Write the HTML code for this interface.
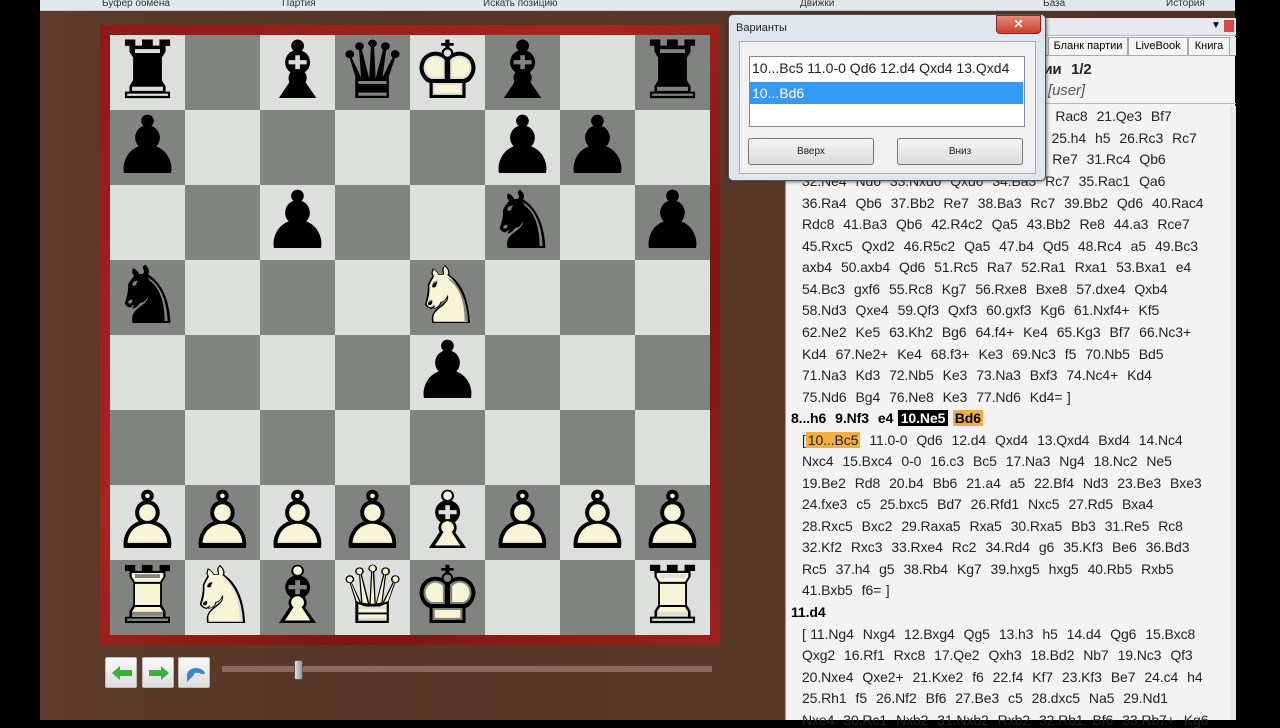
<!DOCTYPE html>
<html><head><meta charset="utf-8"><style>
*{margin:0;padding:0;box-sizing:border-box}
body{width:1280px;height:720px;overflow:hidden;background:#000;position:relative;font-family:"Liberation Sans",sans-serif}
.abs{position:absolute}
#wood{left:40px;top:0;width:1195px;height:720px;background:linear-gradient(90deg,#5e3b2c,#553527 30%,#5b392a 60%,#4f3024);}
#ribbon{left:40px;top:0;width:1195px;height:11px;background:#e3e8ef;border-bottom:1px solid #c8ced8;font-size:10px;color:#333;}
#ribbon span{position:absolute;top:-2px}
#frame{left:100px;top:25px;width:620px;height:620px;background:linear-gradient(135deg,#8e1a18,#a8261f 40%,#7d1512 70%,#9a221c);}
#board{left:110px;top:35px;width:600px;height:600px;display:grid;grid-template-columns:repeat(8,75px);grid-template-rows:repeat(8,75px)}
.sq{position:relative;font-family:"DejaVu Sans",sans-serif;font-size:80px;line-height:72px;text-align:center;overflow:hidden}
.l{background:#dcdfdc}.d{background:#808380}
.b{color:#000}
.w span{position:absolute;left:0;top:0;width:75px}
.w .f{color:#f8f4d6}
.w .o{color:#000}
#panel{left:785px;top:18px;width:450px;height:702px;background:#f3f3f3;border-left:1px solid #999}
.t{position:absolute;left:802px;font-size:14px;color:#222;white-space:pre;word-spacing:0.7px;letter-spacing:-0.1px}
.bold{font-weight:bold;left:791px;color:#000}
.hl{background:#f0b040;padding:0 2px}
.bk{background:#000;color:#fff;padding:0 3px}
#dlg{left:728px;top:14px;width:318px;height:167px;background:#dfe6ee;border:1px solid #555;border-radius:5px;box-shadow:0 0 4px #333}
#dlgin{left:10px;top:26px;width:297px;height:133px;background:#f0f0f0;border:1px solid #aab}
.btn{position:absolute;top:122px;height:27px;width:126px;border:1px solid #777;border-radius:3px;background:linear-gradient(#f4f4f4,#dcdcdc);font-size:10px;text-align:center;line-height:25px;color:#222}
.nb{position:absolute;top:657px;width:32px;height:31px;background:linear-gradient(#fafafa,#ddd);border:1px solid #bbb;border-radius:2px}
</style></head><body>
<div id="wood" class="abs"></div>
<div id="ribbon" class="abs">
<span style="left:62px">Буфер обмена</span><span style="left:242px">Партия</span><span style="left:443px">Искать позицию</span><span style="left:760px">Движки</span><span style="left:1003px">База</span><span style="left:1126px">История</span>
</div>
<div id="frame" class="abs"></div>
<div id="board" class="abs">
<div class="sq l b">♜</div><div class="sq d"></div><div class="sq l b">♝</div><div class="sq d b">♛</div><div class="sq l w"><span class="f">♚</span><span class="o">♔</span></div><div class="sq d b">♝</div><div class="sq l"></div><div class="sq d b">♜</div>
<div class="sq d b">♟</div><div class="sq l"></div><div class="sq d"></div><div class="sq l"></div><div class="sq d"></div><div class="sq l b">♟</div><div class="sq d b">♟</div><div class="sq l"></div>
<div class="sq l"></div><div class="sq d"></div><div class="sq l b">♟</div><div class="sq d"></div><div class="sq l"></div><div class="sq d b">♞</div><div class="sq l"></div><div class="sq d b">♟</div>
<div class="sq d b">♞</div><div class="sq l"></div><div class="sq d"></div><div class="sq l"></div><div class="sq d w"><span class="f">♞</span><span class="o">♘</span></div><div class="sq l"></div><div class="sq d"></div><div class="sq l"></div>
<div class="sq l"></div><div class="sq d"></div><div class="sq l"></div><div class="sq d"></div><div class="sq l b">♟</div><div class="sq d"></div><div class="sq l"></div><div class="sq d"></div>
<div class="sq d"></div><div class="sq l"></div><div class="sq d"></div><div class="sq l"></div><div class="sq d"></div><div class="sq l"></div><div class="sq d"></div><div class="sq l"></div>
<div class="sq l w"><span class="f">♟</span><span class="o">♙</span></div><div class="sq d w"><span class="f">♟</span><span class="o">♙</span></div><div class="sq l w"><span class="f">♟</span><span class="o">♙</span></div><div class="sq d w"><span class="f">♟</span><span class="o">♙</span></div><div class="sq l w"><span class="f">♝</span><span class="o">♗</span></div><div class="sq d w"><span class="f">♟</span><span class="o">♙</span></div><div class="sq l w"><span class="f">♟</span><span class="o">♙</span></div><div class="sq d w"><span class="f">♟</span><span class="o">♙</span></div>
<div class="sq d w"><span class="f">♜</span><span class="o">♖</span></div><div class="sq l w"><span class="f">♞</span><span class="o">♘</span></div><div class="sq d w"><span class="f">♝</span><span class="o">♗</span></div><div class="sq l w"><span class="f">♛</span><span class="o">♕</span></div><div class="sq d w"><span class="f">♚</span><span class="o">♔</span></div><div class="sq l"></div><div class="sq d"></div><div class="sq l w"><span class="f">♜</span><span class="o">♖</span></div>
</div>
<div class="nb" style="left:105px"><svg width="32" height="31"><path d="M6 15 L14 8 L14 12 L26 12 L26 18 L14 18 L14 22Z" fill="#3bb33b"/></svg></div>
<div class="nb" style="left:142px"><svg width="32" height="31"><path d="M26 15 L18 8 L18 12 L6 12 L6 18 L18 18 L18 22Z" fill="#3bb33b"/></svg></div>
<div class="nb" style="left:178px"><svg width="32" height="31"><path d="M8 24 L8 16 Q10 10 18 10 Q25 11 26 16 L22 16 Q20 14 16 15 L14 18Z" fill="#3a86d0"/></svg></div>
<div class="abs" style="left:222px;top:666px;width:490px;height:6px;background:#8a6a5c"></div>
<div class="abs" style="left:294px;top:660px;width:9px;height:20px;background:linear-gradient(90deg,#ddd,#999);border:1px solid #555;border-radius:2px"></div>

<div id="panel" class="abs">
<div class="abs" style="left:0;top:0;width:450px;height:18px;background:#e6e9ee;border-bottom:1px solid #bbb"></div>
<div class="abs" style="left:425px;top:2px;font-size:10px">▼</div>
<div class="abs" style="left:438px;top:2px;width:10px;height:12px;background:#d44;"></div>
<div class="abs" style="left:0;top:19px;width:450px;height:19px;background:#e9ecef;border-bottom:1px solid #999"></div>
<div class="abs" style="left:262px;top:19px;width:80px;height:19px;border:1px solid #aaa;background:#f5f5f5;font-size:11px;text-align:center;line-height:17px">Бланк партии</div>
<div class="abs" style="left:342px;top:19px;width:60px;height:19px;border:1px solid #aaa;background:#f5f5f5;font-size:11px;text-align:center;line-height:17px">LiveBook</div>
<div class="abs" style="left:402px;top:19px;width:42px;height:19px;border:1px solid #aaa;background:#f5f5f5;font-size:11px;text-align:center;line-height:17px">Книга</div>
<div class="abs" style="left:0;top:85px;width:450px;height:1px;background:#bbb"></div>
<div class="abs" style="left:444px;top:88px;width:6px;height:614px;background:#e8e8e8"></div>
</div>
<div class="t" style="left:1010px;top:61px;font-weight:bold;font-size:15px">партии  1/2</div>
<div class="t" style="left:1048px;top:82px;font-style:italic;font-size:15px;color:#555">[user]</div>

<div class="t" style="top:108px;left:998px">19.Rfe1  Rac8  21.Qe3  Bf7</div>
<div class="t" style="top:130px;left:998px">24.Rd8  25.h4  h5  26.Rc3  Rc7</div>
<div class="t" style="top:151px;left:998px">30.Qh3  Re7  31.Rc4  Qb6</div>
<div class="t" style="top:173px">32.Ne4  Nd6  33.Nxd6  Qxd6  34.Ba3  Rc7  35.Rac1  Qa6</div>
<div class="t" style="top:195px">36.Ra4  Qb6  37.Bb2  Re7  38.Ba3  Rc7  39.Bb2  Qd6  40.Rac4</div>
<div class="t" style="top:216px">Rdc8  41.Ba3  Qb6  42.R4c2  Qa5  43.Bb2  Re8  44.a3  Rce7</div>
<div class="t" style="top:238px">45.Rxc5  Qxd2  46.R5c2  Qa5  47.b4  Qd5  48.Rc4  a5  49.Bc3</div>
<div class="t" style="top:259px">axb4  50.axb4  Qd6  51.Rc5  Ra7  52.Ra1  Rxa1  53.Bxa1  e4</div>
<div class="t" style="top:281px">54.Bc3  gxf6  55.Rc8  Kg7  56.Rxe8  Bxe8  57.dxe4  Qxb4</div>
<div class="t" style="top:302px">58.Nd3  Qxe4  59.Qf3  Qxf3  60.gxf3  Kg6  61.Nxf4+  Kf5</div>
<div class="t" style="top:324px">62.Ne2  Ke5  63.Kh2  Bg6  64.f4+  Ke4  65.Kg3  Bf7  66.Nc3+</div>
<div class="t" style="top:346px">Kd4  67.Ne2+  Ke4  68.f3+  Ke3  69.Nc3  f5  70.Nb5  Bd5</div>
<div class="t" style="top:367px">71.Na3  Kd3  72.Nb5  Ke3  73.Na3  Bxf3  74.Nc4+  Kd4</div>
<div class="t" style="top:389px">75.Nd6  Bg4  76.Ne8  Ke3  77.Nd6  Kd4= ]</div>
<div class="t bold" style="top:410px">8...h6  9.Nf3  e4 <span class="bk">10.Ne5</span> <span class="hl">Bd6</span></div>
<div class="t" style="top:432px">[<span class="hl">10...Bc5</span>  11.0-0  Qd6  12.d4  Qxd4  13.Qxd4  Bxd4  14.Nc4</div>
<div class="t" style="top:453px">Nxc4  15.Bxc4  0-0  16.c3  Bc5  17.Na3  Ng4  18.Nc2  Ne5</div>
<div class="t" style="top:475px">19.Be2  Rd8  20.b4  Bb6  21.a4  a5  22.Bf4  Nd3  23.Be3  Bxe3</div>
<div class="t" style="top:496px">24.fxe3  c5  25.bxc5  Bd7  26.Rfd1  Nxc5  27.Rd5  Bxa4</div>
<div class="t" style="top:518px">28.Rxc5  Bxc2  29.Raxa5  Rxa5  30.Rxa5  Bb3  31.Re5  Rc8</div>
<div class="t" style="top:539px">32.Kf2  Rxc3  33.Rxe4  Rc2  34.Rd4  g6  35.Kf3  Be6  36.Bd3</div>
<div class="t" style="top:561px">Rc5  37.h4  g5  38.Rb4  Kg7  39.hxg5  hxg5  40.Rb5  Rxb5</div>
<div class="t" style="top:582px">41.Bxb5  f6= ]</div>
<div class="t bold" style="top:604px">11.d4</div>
<div class="t" style="top:626px">[ 11.Ng4  Nxg4  12.Bxg4  Qg5  13.h3  h5  14.d4  Qg6  15.Bxc8</div>
<div class="t" style="top:647px">Qxg2  16.Rf1  Rxc8  17.Qe2  Qxh3  18.Bd2  Nb7  19.Nc3  Qf3</div>
<div class="t" style="top:669px">20.Nxe4  Qxe2+  21.Kxe2  f6  22.f4  Kf7  23.Kf3  Be7  24.c4  h4</div>
<div class="t" style="top:690px">25.Rh1  f5  26.Nf2  Bf6  27.Be3  c5  28.dxc5  Na5  29.Nd1</div>
<div class="t" style="top:712px">Nxe4  30.Rc1  Nxb2  31.Nxb2  Rxb2  32.Rb1  Bf6  33.Rb7+  Kg6</div>

<div id="dlg" class="abs">
<div class="abs" style="left:7px;top:7px;font-size:11px;color:#222">Варианты</div>
<div class="abs" style="left:267px;top:0;width:45px;height:19px;background:linear-gradient(#e88a7a,#c8402c);border:1px solid #822;border-radius:0 0 4px 4px;color:#fff;font-size:12px;text-align:center;line-height:17px;font-weight:bold">✕</div>
<div id="dlgin" class="abs">
<div class="abs" style="left:9px;top:14px;width:276px;height:71px;background:#fff;border:1px solid #889"></div>
<div class="abs" style="left:12px;top:18px;font-size:14px;color:#222;white-space:pre">10...Bc5 11.0-0 Qd6 12.d4 Qxd4 13.Qxd4</div>
<div class="abs" style="left:10px;top:40px;width:273px;height:22px;background:#3399f3;color:#fff;font-size:14px;line-height:22px;padding-left:2px">10...Bd6</div>
<div class="btn" style="left:8px;top:96px">Вверх</div>
<div class="btn" style="left:157px;top:96px">Вниз</div>
</div>
</div>
</body></html>
